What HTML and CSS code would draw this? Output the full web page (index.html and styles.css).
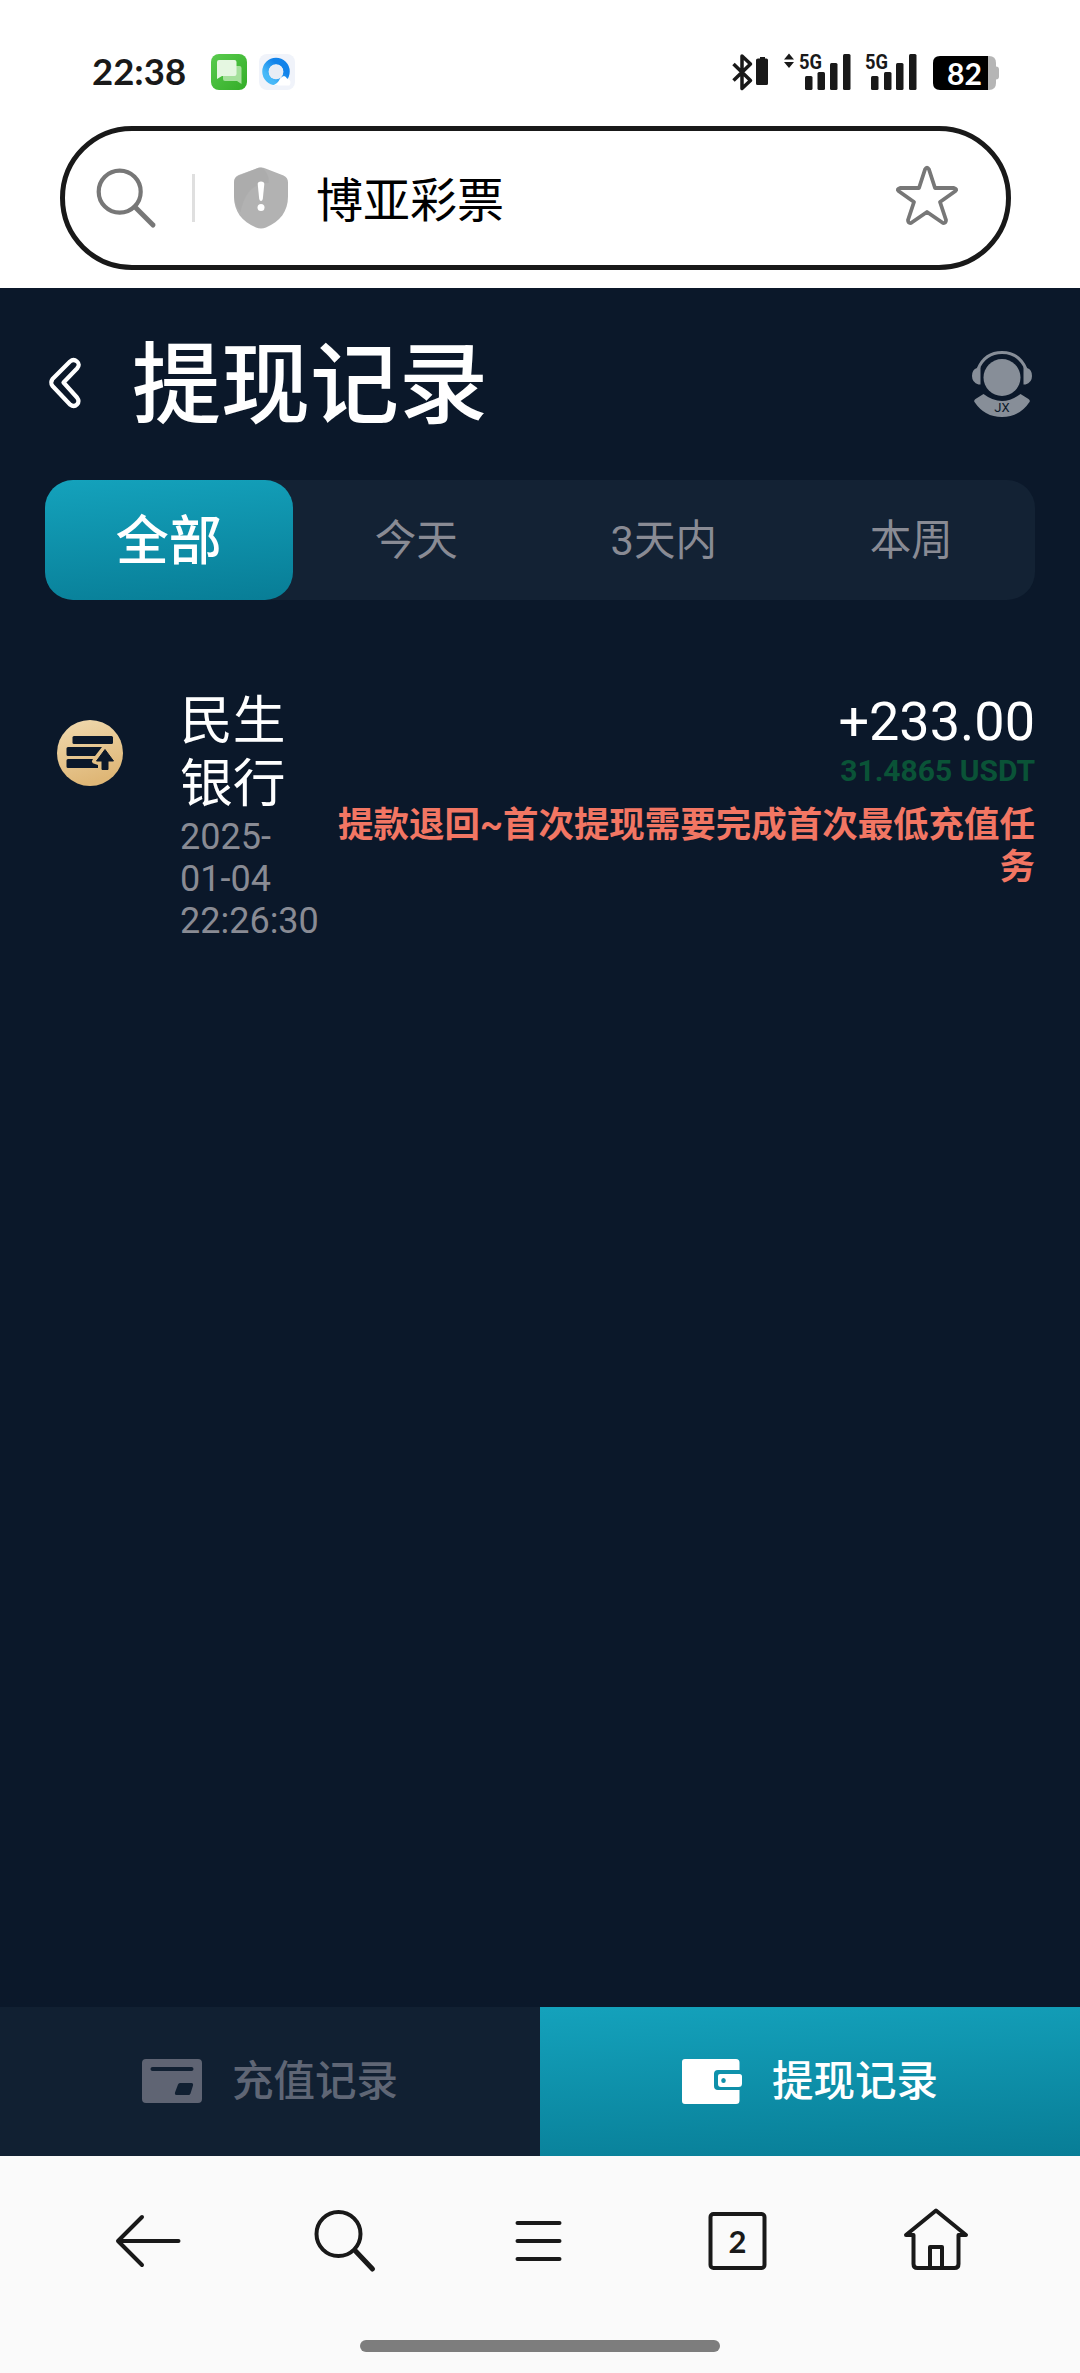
FILE: index.html
```html
<!DOCTYPE html>
<html lang="zh-CN">
<head>
<meta charset="utf-8">
<title>提现记录</title>
<link rel="stylesheet" href="styles.css">
</head>
<body>
<div class="screen">
  <header class="chrome">
    <div class="status">
      <span class="clock">22:38</span>
      <svg class="app-icon" width="36" height="36" viewBox="0 0 36 36">
        <defs><linearGradient id="green" x1="0" y1="0" x2="1" y2="1"><stop offset="0" stop-color="#5acb4f"/><stop offset="1" stop-color="#33ad27"/></linearGradient></defs>
        <rect width="36" height="36" rx="8" fill="url(#green)"/>
        <path d="M14 12h14.500q2 0 2 2v16l-4.500-3H14q-2 0-2-2V14q0-2 2-2z" fill="#a5e09c"/>
        <path d="M8 6h15.500q2 0 2 2v12q0 2-2 2H11l-5 3V8q0-2 2-2z" fill="#e5f7e1"/>
      </svg>
      <svg class="app-icon" width="36" height="36" viewBox="0 0 36 36">
        <defs><linearGradient id="blue" x1="1" y1="0" x2="0" y2="1"><stop offset=".3" stop-color="#1283ea"/><stop offset=".8" stop-color="#48b9f8"/></linearGradient></defs>
        <rect width="36" height="36" rx="8" fill="#f0f3fa"/>
        <circle cx="17" cy="17.500" r="10.500" fill="none" stroke="url(#blue)" stroke-width="6.500"/>
        <circle cx="17" cy="18" r="7.300" fill="#e8edf5"/>
        <path d="M13 31.500q6-1.500 8-7 4.500-5 7 0 5.500 2 2.500 7z" fill="#fff"/>
      </svg>
      <svg class="signals" width="267" height="44" viewBox="732 50 267 44">
        <path d="M733.500 64l17 16.500-8.500 8V56l8.500 8-17 16.500" fill="none" stroke="#191919" stroke-width="3.500" stroke-linejoin="round"/>
        <path d="M758 58.500h2V57h5v1.500h1.500q1.500 0 1.500 1.500v23.500q0 1.500-1.500 1.500h-9q-1.500 0-1.500-1.500V60q0-1.500 2-1.500z" fill="#191919"/>
        <path d="M789 53.500l5 6h-10zM789 68l5-6h-10z" fill="#191919"/>
        <g fill="#191919">
          <text x="799" y="68.500" textLength="23" lengthAdjust="spacingAndGlyphs" class="net">5G</text>
          <rect x="805" y="76" width="7.500" height="14" rx="1.500"/><rect x="817.500" y="72" width="7.500" height="18" rx="1.500"/><rect x="830" y="63" width="7.500" height="27" rx="1.500"/><rect x="843" y="54" width="7.500" height="36" rx="1.500"/>
          <text x="865" y="68.500" textLength="23" lengthAdjust="spacingAndGlyphs" class="net">5G</text>
          <rect x="871" y="76" width="7.500" height="14" rx="1.500"/><rect x="884" y="72" width="7.500" height="18" rx="1.500"/><rect x="896" y="63" width="7.500" height="27" rx="1.500"/><rect x="909" y="54" width="7.500" height="36" rx="1.500"/>
        </g>
        <path d="M988 56h1q7 0 7 7v3.500q3 0 3 3v7q0 3-3 3V83q0 7-7 7h-1z" fill="#b5b5b5"/>
        <path d="M988 56v34h-48q-7 0-7-7V63q0-7 7-7z" fill="#000"/>
        <text x="947" y="84.500" textLength="35" lengthAdjust="spacingAndGlyphs" class="level">82</text>
      </svg>
    </div>
    <div class="address">
      <svg class="find" width="60" height="60" viewBox="96 168 60 60" fill="none" stroke="#777" stroke-width="4.200" stroke-linecap="round"><circle cx="119.700" cy="191.700" r="21"/><path d="M135 207l18 18" stroke-width="5"/></svg>
      <i class="divider"></i>
      <svg class="shield" width="54" height="62" viewBox="234 167 54 62">
        <path d="M256.500 168.500q4.500-2 9 0l18 7q4.500 2 4.500 7v14c0 15-8 25-22 31q-5 2-10 0c-14-6-22-16-22-31v-14q0-5 4.500-7z" fill="#b2b2b2"/>
        <path d="M256.500 168.500q4-2 7 .5 6 6 5 14-22 0-28 29-6-7-6.500-16v-14q0-5 4.500-7z" fill="#a8a8a8" opacity=".6"/>
        <path d="M257.700 184q0-2.500 3.300-2.500t3.300 2.500l-1.500 15q-.5 2-1.800 2t-1.800-2z" fill="#fff"/><circle cx="261" cy="207.500" r="3.500" fill="#fff"/>
      </svg>
      <span class="site">博亚彩票</span>
      <svg class="star" width="64" height="62" viewBox="895 163 64 62"><path d="M925 168.500q2-3.500 4 0l6 18.500h19q3.500 1 1.500 3l-15.500 11 6 18q0 3.500-3 3l-16-11-16 11q-3 .5-3-3l6-18-15.500-11q-2-2 1.500-3h19z" fill="none" stroke="#777" stroke-width="3.800" stroke-linejoin="round"/></svg>
    </div>
  </header>

  <main class="page">
    <div class="title-bar">
      <svg class="back" width="32" height="50" viewBox="49 358 32 50"><path d="M70 361.500q3.500-3 7 0t0 7L63.500 382.500 77 397.500q3 4 0 7t-7 0L52.500 386q-2.500-3.500 0-7z" fill="none" stroke="#fff" stroke-width="4.200" stroke-linejoin="round"/></svg>
      <h1>提现记录</h1>
      <svg class="support" width="60" height="66" viewBox="972 351 60 66">
        <g fill="#878e98">
          <circle cx="1002" cy="377.500" r="18.500"/>
          <path d="M980.500 367v17.500h-2q-6.500-2-6.500-8.500t5-8zM1023.500 367v17.500h2q6.500-2 6.500-8.500t-5-8z"/>
          <path d="M983.500 394q18.500 14 37 0l8 5q2 1.500 1 3-10 15-27.500 15t-27.500-15q-1-1.500 1-3z"/>
        </g>
        <path d="M978 369q7-16.500 24-16.500t24 16.500" fill="none" stroke="#878e98" stroke-width="3"/>
        <text x="1002" y="412" text-anchor="middle" class="jx">JX</text>
      </svg>
    </div>

    <nav class="filters">
      <a class="filter active">全部</a>
      <a class="filter">今天</a>
      <a class="filter">3天内</a>
      <a class="filter">本周</a>
    </nav>

    <article class="record">
      <svg class="record-icon" width="66" height="66" viewBox="57 720 66 66">
        <defs><linearGradient id="gold" x1="0" y1="0" x2=".3" y2="1"><stop offset="0" stop-color="#f0dab0"/><stop offset="1" stop-color="#dfb777"/></linearGradient></defs>
        <circle cx="90" cy="753" r="33" fill="url(#gold)"/>
        <g fill="#0b182a"><rect x="72.500" y="736" width="40.500" height="8" rx="1.500"/><path d="M68 747h34l-7 9H68q-1.500 0-1.500-1.500v-6q0-1.500 1.500-1.500zM68 759h25q-3 4 2 5l3 1v3H68q-1.500 0-1.500-1.500v-6Q66.500 759 68 759z"/></g>
        <path d="M105 749.500l8.500 11.500h-5.500v8.500h-6v-8.500h-5.500z" fill="#0b182a" stroke="#0b182a" stroke-linejoin="round"/>
      </svg>
      <div class="source">
        <div class="bank">民生银行</div>
        <time>2025-01-04 22:26:30</time>
      </div>
      <div class="result">
        <div class="amount">+233.00</div>
        <div class="usdt">31.4865 USDT</div>
        <div class="reason">提款退回~首次提现需要完成首次最低充值任务</div>
      </div>
    </article>
  </main>

  <nav class="tabs">
    <a class="tab">
      <svg width="60" height="45" viewBox="0 0 60 45"><path fill-rule="evenodd" fill="#5f6473" d="M4 0h52q4 0 4 4v36q0 4-4 4H4q-4 0-4-4V4q0-4 4-4zM10.500 8a2 2 0 0 0 0 4h39a2 2 0 0 0 0-4zM38 24q-1.500 0-2 1.500l-3 8q-.5 2.500 1.500 2.500h12q1.500 0 2-1.500l2.500-8q.5-2.500-1.500-2.500z"/></svg>
      <span>充值记录</span>
    </a>
    <a class="tab current">
      <svg width="60" height="45" viewBox="0 0 60 45" fill="#fff"><path d="M3 0h51q3.500 0 3.500 3.500V11H36q-4 0-4 4v12q0 4 4 4h21.500v10.500q0 3.500-3.500 3.500H3q-3 0-3-3V3q0-3 3-3z"/><path fill-rule="evenodd" d="M38 15h19.500q2.500 0 2.500 2.500v7q0 3.500-3.500 3.500H39q-3 0-3-3v-8q0-2 2-2zM41.500 19a2.300 2.500 0 0 0 0 5 2.300 2.500 0 0 0 0-5z"/></svg>
      <span>提现记录</span>
    </a>
  </nav>

  <footer class="browser-bar">
    <div class="buttons">
      <svg width="66" height="66" viewBox="114.500 2208 66 66"><path d="M178 2241h-60M141.500 2217l-24 24 24 24"/></svg>
      <svg width="66" height="66" viewBox="311.500 2208 66 66"><circle cx="338" cy="2234" r="22"/><path d="M355 2251l17 18" stroke-width="5"/></svg>
      <svg width="66" height="66" viewBox="508.500 2208 66 66"><path d="M517 2223h42M517 2241h42M517 2259h42"/></svg>
      <svg width="66" height="66" viewBox="705.500 2208 66 66"><rect x="710" y="2214" width="54" height="54" rx="3"/><text x="737" y="2253" text-anchor="middle" class="count">2</text></svg>
      <svg width="66" height="66" viewBox="902.500 2208 66 66"><path d="M913 2235h-7.500l30-24.500 30 24.500H958v29q0 4-4 4h-37q-4 0-4-4zM929.500 2268v-21h12v21"/></svg>
    </div>
    <i class="home-indicator"></i>
  </footer>
</div>
</body>
</html>
```

FILE: styles.css
```css
* { box-sizing: border-box; }
body { margin: 0; background: #0b182a; font-family: Roboto, "Noto Sans CJK SC", sans-serif; }
svg { display: block; flex: none; overflow: visible; }
.screen { width: 1080px; height: 2373px; display: flex; flex-direction: column; }

.chrome { height: 288px; background: #fff; padding: 52px 69px 0 60px; }
.status { height: 40px; display: flex; align-items: center; margin-bottom: 34px; padding-left: 32px; }
.clock { width: 119px; padding-bottom: 2px; font: 700 36.500px/38px Lato, sans-serif; color: #191919; }
.app-icon { margin-right: 12px; }
.signals { margin-left: auto; margin-right: 12px; }
.net { font: 700 21px/1 "Roboto", sans-serif; }
.level { font: 700 31px/1 Lato, sans-serif; fill: #fff; }
.address { width: 951px; height: 144px; border: 5px solid #191919; border-radius: 72px; padding: 0 47px 0 31px; display: flex; align-items: center; }
.find { margin: -1px 36px 0 0; }
.divider { width: 3px; height: 48px; background: #dfdfdf; margin-right: 39px; }
.site { margin-left: 28px; padding-bottom: 3px; font: 400 47px/60px "Noto Sans CJK SC", sans-serif; color: #000; }
.star { margin: -7px 0 0 auto; }

.page { flex: 1; padding: 0 45px; color: #fff; }
.title-bar { height: 192px; display: flex; align-items: center; padding: 0 3px 3px 4px; }
h1 { margin: 0 0 0 51px; padding-bottom: 10px; font: 500 89px/110px "Noto Sans CJK SC", sans-serif; }
.support { margin-left: auto; margin-top: 3px; }
.jx { font: 400 13px/1 Roboto, sans-serif; fill: #0b182a; }

.filters { height: 120px; display: grid; grid-template-columns: repeat(4, 1fr); background: #132234; border-radius: 28px; }
.filter { display: flex; align-items: center; justify-content: center; padding-bottom: 6px; font-size: 41.500px; color: #898b94; border-radius: 28px; }
.filter.active { background: linear-gradient(175deg, #14a2bc, #087d96); color: #fff; font-size: 53px; font-weight: 500; }

.record { display: flex; padding: 90px 0 0 12px; }
.record-icon { margin-top: 30px; }
.source { margin-left: 57px; width: 138px; }
.bank { width: 110px; font-size: 52.800px; line-height: 63px; }
time { display: block; font-size: 36px; line-height: 42px; color: #898b94; }
.result { margin-left: 12px; flex: 1; text-align: right; }
.amount { font-size: 54px; line-height: 63px; }
.usdt { font-size: 30px; font-weight: 700; line-height: 36px; color: #0a5337; }
.reason { margin-top: 15px; font-size: 35.480px; font-weight: 700; line-height: 42px; color: #f27663; }

.tabs { height: 149px; display: grid; grid-template-columns: 1fr 1fr; }
.tab { display: flex; align-items: center; justify-content: center; gap: 30px; background: #112032; color: #5f6675; font-size: 41.500px; font-weight: 500; }
.tab span { padding-bottom: 7px; }
.tab.current { background: linear-gradient(177deg, #14a2bc, #087d96); color: #fff; }

.browser-bar { height: 217px; background: #fafafa; padding-top: 52px; }
.buttons { display: flex; justify-content: space-between; padding: 0 111.500px 0 114.500px; fill: none; stroke: #191919; stroke-width: 4; stroke-linecap: round; stroke-linejoin: round; }
.count { font: 700 31px/1 Lato, sans-serif; fill: #191919; stroke: none; }
.home-indicator { display: block; width: 360px; height: 12px; border-radius: 6px; background: #7d7d7d; margin: 66px auto 0; }
```
